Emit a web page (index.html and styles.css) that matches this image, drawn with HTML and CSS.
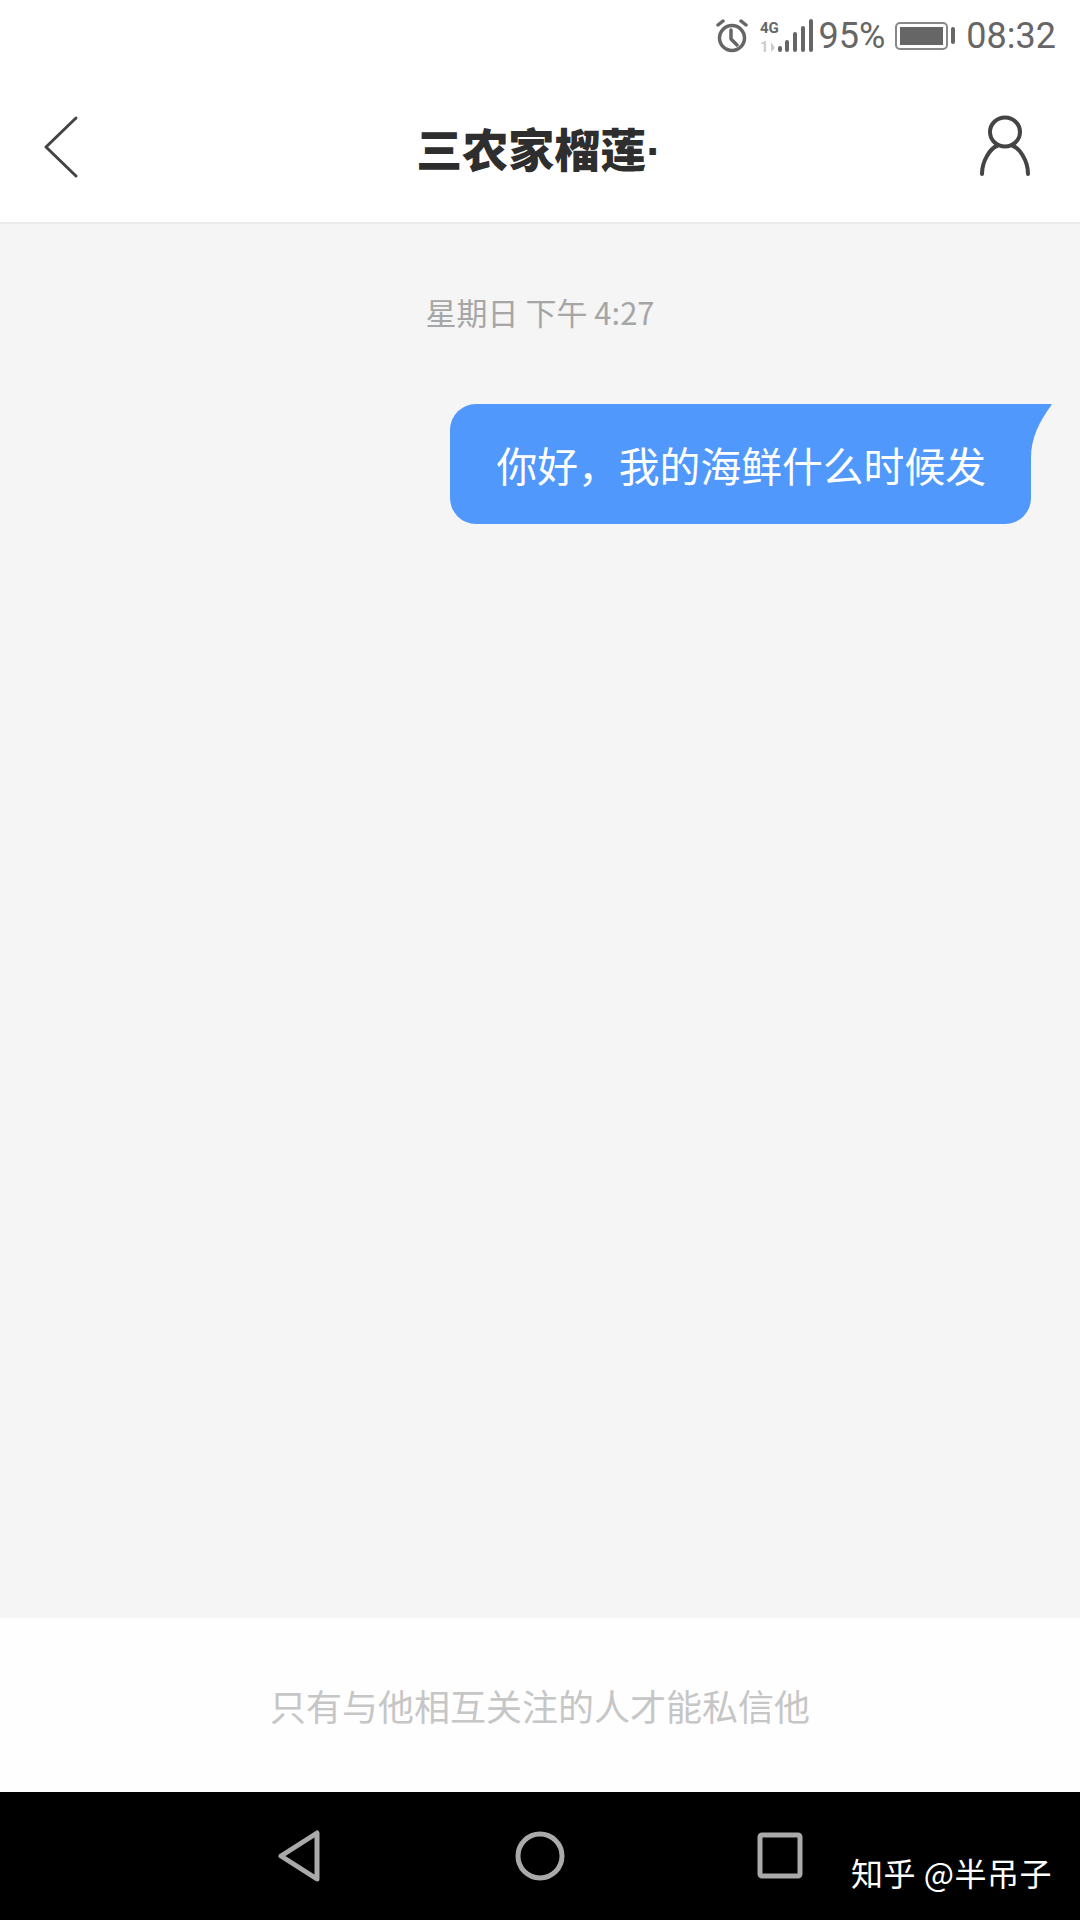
FILE: index.html
```html
<!DOCTYPE html>
<html lang="zh-CN">
<head>
<meta charset="UTF-8">
<meta name="viewport" content="width=device-width, initial-scale=1.0">
<title>私信</title>
<link rel="stylesheet" href="styles.css">
</head>
<body>
  <div class="app">
    <div class="status-bar">
      <svg class="icon-alarm" width="32" height="34" viewBox="0 0 32 34" fill="none" stroke="#666" stroke-width="3.5" stroke-linecap="round" stroke-linejoin="round">
        <circle cx="16" cy="19" r="12.5"/>
        <path d="M15 11v9l6 6"/>
        <path d="M2 6l5-4M30 6l-5-4"/>
      </svg>
      <svg class="icon-signal" width="53" height="40" viewBox="0 -3 53 40">
        <text class="net-label" x="0" y="14">4G</text>
        <text class="net-label net-label-off" x="0" y="33">1</text>
        <path d="M11 23v10l4-4z" fill="#ccc"/>
        <rect x="18" y="27" width="4" height="6" rx="2" fill="#666"/>
        <rect x="25" y="21" width="4" height="12" rx="2" fill="#666"/>
        <rect x="33" y="13" width="4" height="20" rx="2" fill="#666"/>
        <rect x="41" y="7" width="4" height="26" rx="2" fill="#666"/>
        <rect x="49" y="0" width="4" height="33" rx="2" fill="#666"/>
      </svg>
      <span class="status-text battery-text">95%</span>
      <svg class="icon-battery" width="60" height="28" viewBox="0 0 60 28">
        <rect x="1" y="1" width="51" height="26" rx="4" fill="none" stroke="#888" stroke-width="2"/>
        <rect x="5" y="5" width="43" height="18" fill="#666"/>
        <rect x="56" y="5" width="4" height="17" rx="2" fill="#666"/>
      </svg>
      <span class="status-text">08:32</span>
    </div>

    <header class="nav-bar">
      <svg class="nav-icon" width="64" height="64" viewBox="0 0 64 64" fill="none" stroke="#444" stroke-width="3" stroke-linecap="round" stroke-linejoin="round">
        <path d="M36 3L6 32l30 29"/>
      </svg>
      <h1 class="nav-title">三农家榴莲<span class="nav-title-dot">·</span></h1>
      <svg class="nav-icon" width="64" height="64" viewBox="0 0 64 64" fill="none" stroke="#444" stroke-width="4" stroke-linecap="round">
        <ellipse cx="31" cy="17" rx="15" ry="14.5"/>
        <path d="M8 59c0-14 9-26 15-28M54 59c0-14-9-26-15-28"/>
      </svg>
    </header>

    <main class="chat">
      <p class="chat-time">星期日 下午 4:27</p>
      <div class="bubble">
        你好，我的海鲜什么时候发
        <svg class="bubble-tail" width="21" height="54" viewBox="0 0 21 54">
          <path d="M0 0h20q1 0 .5 1C8 18 0 34 0 54z" fill="#5098fb"/>
        </svg>
      </div>
    </main>

    <div class="notice">只有与他相互关注的人才能私信他</div>

    <footer class="system-nav">
      <svg width="60" height="60" viewBox="0 0 60 60" fill="none" stroke="#aaa" stroke-width="5" stroke-linejoin="round">
        <path d="M47 7v46L11 30z"/>
      </svg>
      <svg width="60" height="60" viewBox="0 0 60 60" fill="none" stroke="#aaa" stroke-width="5">
        <circle cx="30" cy="30" r="22"/>
      </svg>
      <svg width="60" height="60" viewBox="0 0 60 60" fill="none" stroke="#aaa" stroke-width="5" stroke-linejoin="round">
        <rect x="10" y="9" width="40" height="41" rx="2"/>
      </svg>
      <span class="watermark">知乎 @半吊子</span>
    </footer>
  </div>
</body>
</html>
```

FILE: styles.css
```css
body {
  margin: 0;
  padding: 0;
  font-family: "Noto Sans CJK SC", "Noto Sans", sans-serif;
  background-color: #ffffff;
}

.app {
  display: flex;
  flex-direction: column;
  height: 100vh;
}

/* status bar */
.status-bar {
  height: 72px;
  padding-right: 24px;
  display: flex;
  justify-content: flex-end;
  align-items: center;
  flex-shrink: 0;
}

.status-text {
  font-family: Roboto, sans-serif;
  font-size: 36px;
  color: #666666;
  margin-left: 11px;
}

.battery-text {
  margin-left: 6px;
}

.icon-signal {
  margin-left: 12px;
}

.icon-battery {
  margin-left: 10px;
}

.net-label {
  font-family: Roboto, sans-serif;
  font-size: 15px;
  font-weight: 700;
  fill: #666666;
}

.net-label-off {
  fill: #cccccc;
}

/* title bar */
.nav-bar {
  height: 150px;
  padding: 0 42px 0 40px;
  display: flex;
  justify-content: space-between;
  align-items: center;
  border-bottom: 2px solid #ebebeb;
  flex-shrink: 0;
}

.nav-title {
  margin: 0;
  font-size: 46px;
  font-weight: 900;
  color: #2e2e2e;
}

.nav-title-dot {
  font-family: "Liberation Sans", sans-serif;
}

/* messages */
.chat {
  flex: 1;
  background-color: #f5f5f5;
  display: flex;
  flex-direction: column;
}

.chat-time {
  margin: 68px 0 72px;
  font-size: 31px;
  line-height: 40px;
  text-align: center;
  color: #a6a6a6;
}

.bubble {
  position: relative;
  align-self: flex-end;
  margin-right: 49px;
  padding: 0 45px 0 46px;
  height: 120px;
  display: flex;
  align-items: center;
  font-size: 40.8px;
  color: #ffffff;
  background-color: #5098fb;
  border-radius: 26px 0 26px 26px;
}

.bubble-tail {
  position: absolute;
  left: 100%;
  top: 0;
}

/* bottom notice */
.notice {
  height: 174px;
  display: flex;
  justify-content: center;
  align-items: center;
  font-size: 36px;
  color: #c6c6c6;
  background-color: #fefefe;
  flex-shrink: 0;
}

/* android nav */
.system-nav {
  position: relative;
  height: 128px;
  display: flex;
  justify-content: center;
  align-items: center;
  gap: 180px;
  background-color: #000000;
  flex-shrink: 0;
}

.watermark {
  position: absolute;
  left: 851px;
  top: 60px;
  font-size: 32px;
  letter-spacing: 0.5px;
  line-height: 40px;
  color: #ffffff;
}
```
